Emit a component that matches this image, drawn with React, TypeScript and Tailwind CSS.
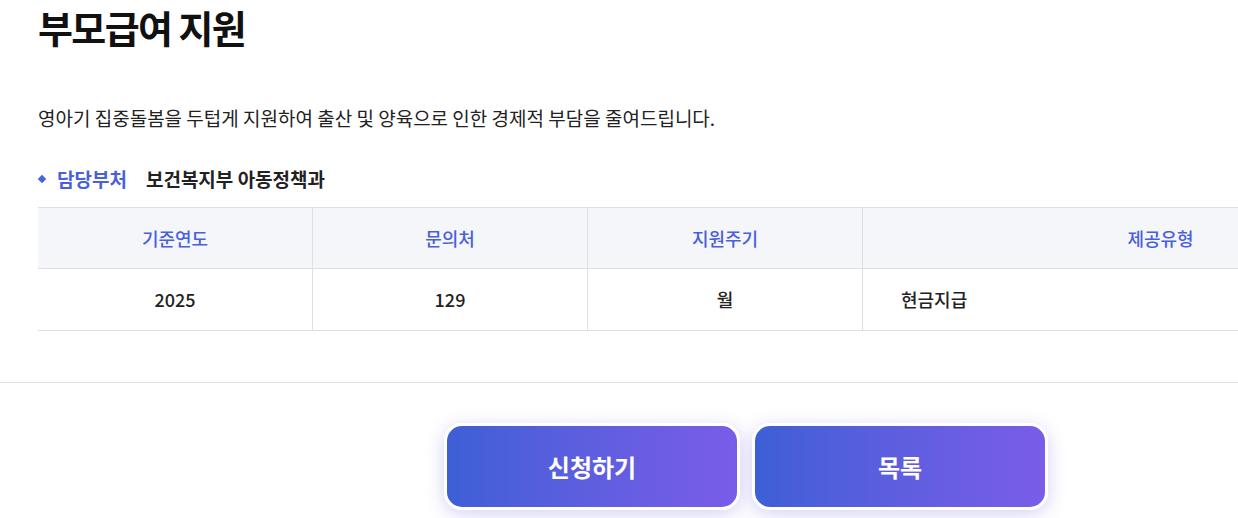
const font = { fontFamily: '"Noto Sans CJK KR", "Noto Sans", sans-serif' };

const headers = ["기준연도", "문의처", "지원주기", "제공유형"];

export default function App() {
  return (
    <div className="w-[1238px] h-[518px] overflow-hidden bg-white" style={font}>
      <div className="w-[1420px] ml-[38px]">
        <h1 className="text-[38px] font-bold text-[#111] leading-[54px] tracking-[-1.6px]">
          부모급여 지원
        </h1>

        <p className="mt-[51px] text-[19px] leading-[26px] text-[#222]">
          영아기 집중돌봄을 두텁게 지원하여 출산 및 양육으로 인한 경제적 부담을 줄여드립니다.
        </p>

        <div className="mt-[35px] flex items-center h-[26px]">
          <span className="w-[6px] h-[6px] bg-[#4a63dd] rotate-45 ml-[1px] mr-[12px]" />
          <span className="text-[19px] font-bold text-[#4a5fdc]">담당부처</span>
          <span className="ml-[19px] text-[19px] font-semibold text-[#222]">
            보건복지부 아동정책과
          </span>
        </div>

        {/* 정보 테이블 */}
        <div className="mt-[15px] border-t border-[#dedfe3]">
          <div className="grid grid-cols-[275px_275px_275px_595px] bg-[#f5f6fa] h-[61px] border-b border-[#dedfe3]">
            {headers.map((h, i) => (
              <div
                key={h}
                className={`flex items-center justify-center text-[18px] font-medium text-[#4a5fdc] ${
                  i < 3 ? "border-r border-[#dedfe3]" : ""
                }`}
              >
                {h}
              </div>
            ))}
          </div>
          <div className="grid grid-cols-[275px_275px_275px_595px] h-[62px] border-b border-[#dedfe3]">
            <div className="flex items-center justify-center text-[18px] font-medium text-[#222] border-r border-[#dedfe3]">
              2025
            </div>
            <div className="flex items-center justify-center text-[18px] font-medium text-[#222] border-r border-[#dedfe3]">
              129
            </div>
            <div className="flex items-center justify-center text-[18px] font-medium text-[#222] border-r border-[#dedfe3]">
              월
            </div>
            <div className="flex items-center pl-[38px] text-[18px] font-medium text-[#222]">
              현금지급
            </div>
          </div>
        </div>
      </div>

      <div className="mt-[51px] border-t border-[#e2e2e2]" />

      <div className="w-[1416px] ml-[38px] mt-[40px] flex justify-center gap-[12px]">
        <button className="w-[296px] h-[87px] rounded-[18px] border-[3px] border-white bg-gradient-to-r from-[#3d5fd6] to-[#7a5ce9] text-white text-[24px] font-bold shadow-[0_4px_18px_rgba(100,90,220,0.28)]">
          신청하기
        </button>
        <button className="w-[296px] h-[87px] rounded-[18px] border-[3px] border-white bg-gradient-to-r from-[#3d5fd6] to-[#7a5ce9] text-white text-[24px] font-bold shadow-[0_4px_18px_rgba(100,90,220,0.28)]">
          목록
        </button>
      </div>
    </div>
  );
}
